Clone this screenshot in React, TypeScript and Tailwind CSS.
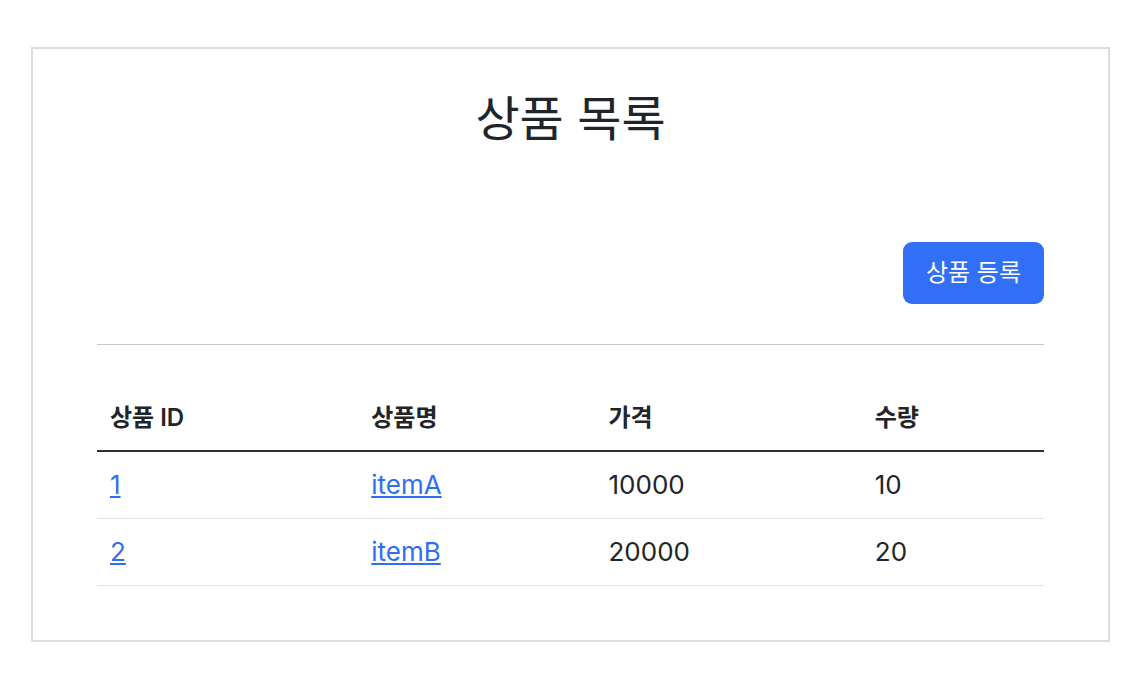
const items = [
  { id: 1, name: "itemA", price: 10000, quantity: 10 },
  { id: 2, name: "itemB", price: 20000, quantity: 20 },
];

export default function App() {
  return (
    <div
      className="min-h-screen bg-white pt-[47px] pl-[31px] text-[#212529]"
      style={{ fontFamily: 'Inter, "Noto Sans CJK KR", sans-serif' }}
    >
      <div className="w-[1079px] h-[595px] border-2 border-[#dcdcdc] px-[64px] pt-[42px]">
        <h2 className="text-center text-[48px] leading-[56px] font-normal">상품 목록</h2>

        <div className="flex justify-end mt-[95px]">
          <button className="w-[141px] h-[62px] rounded-[9px] bg-[#306ff6] text-white text-[24px]">
            상품 등록
          </button>
        </div>

        <hr className="mt-[40px] border-0 border-t border-[#c6c6c6]" />

        <table className="mt-[40px] w-full border-collapse text-[24px]">
          <thead>
            <tr className="border-b-2 border-[#2b2f33]">
              <th className="w-[261px] h-[66px] pl-[13px] text-left font-semibold">상품 ID</th>
              <th className="w-[237px] h-[66px] pl-[13px] text-left font-semibold">상품명</th>
              <th className="w-[266px] h-[66px] pl-[13px] text-left font-semibold">가격</th>
              <th className="w-[182px] h-[66px] pl-[13px] text-left font-semibold">수량</th>
            </tr>
          </thead>
          <tbody className="text-[26px]">
            {items.map((item) => (
              <tr key={item.id} className="border-b border-[#dee2e6]">
                <td className="h-[67px] pl-[13px]">
                  <a href="#" className="text-[#2f6ef4] underline">
                    {item.id}
                  </a>
                </td>
                <td className="h-[67px] pl-[13px]">
                  <a href="#" className="text-[#2f6ef4] underline">
                    {item.name}
                  </a>
                </td>
                <td className="h-[67px] pl-[13px]">{item.price}</td>
                <td className="h-[67px] pl-[13px]">{item.quantity}</td>
              </tr>
            ))}
          </tbody>
        </table>
      </div>
    </div>
  );
}
